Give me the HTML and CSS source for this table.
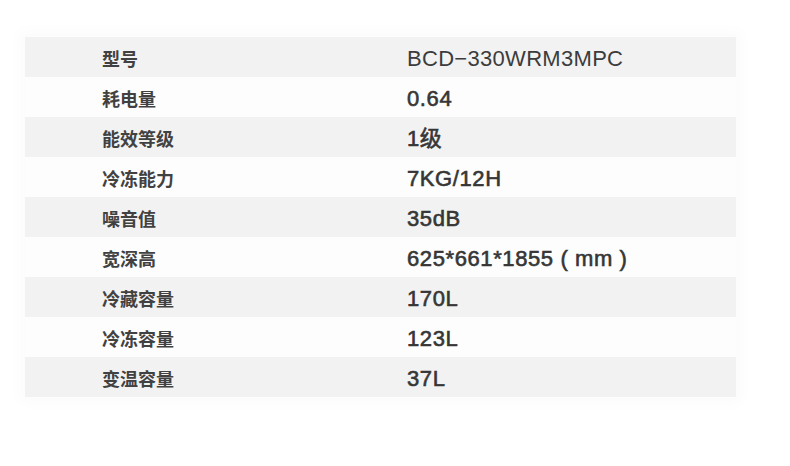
FILE: index.html
```html
<!DOCTYPE html>
<html lang="zh-CN">
<head>
<meta charset="utf-8">
<link rel="stylesheet" href="styles.css">
</head>
<body>
<div class="page">
  <div class="spec">
    <div class="row alt"><div class="label">型号</div><div class="value thin">BCD−330WRM3MPC</div></div>
    <div class="row"><div class="label">耗电量</div><div class="value">0.64</div></div>
    <div class="row alt"><div class="label">能效等级</div><div class="value">1级</div></div>
    <div class="row"><div class="label">冷冻能力</div><div class="value">7KG/12H</div></div>
    <div class="row alt"><div class="label">噪音值</div><div class="value">35dB</div></div>
    <div class="row"><div class="label">宽深高</div><div class="value">625*661*1855 ( mm )</div></div>
    <div class="row alt"><div class="label">冷藏容量</div><div class="value">170L</div></div>
    <div class="row"><div class="label">冷冻容量</div><div class="value">123L</div></div>
    <div class="row alt"><div class="label">变温容量</div><div class="value">37L</div></div>
  </div>
</div>
</body>
</html>
```
FILE: styles.css
```css
html, body {
  margin: 0;
  padding: 0;
  background: #ffffff;
}
.page {
  width: 790px;
  height: 466px;
  padding: 37px 0 0 25px;
  box-sizing: border-box;
}
.spec {
  width: 711px;
  background: #fdfdfd;
  box-shadow: 0 0 14px 6px #fbfbfb;
}
.row {
  display: grid;
  grid-template-columns: 382px 1fr;
  align-items: center;
  height: 40px;
}
.row.alt {
  background: #f2f2f2;
}
.label {
  padding-left: 77px;
  font-family: "Noto Sans CJK SC", sans-serif;
  font-weight: 700;
  font-size: 18px;
  color: #414141;
  line-height: 40px;
}
.value {
  font-family: "Liberation Sans", "Noto Sans CJK SC", sans-serif;
  font-weight: 400;
  font-size: 22px;
  letter-spacing: 0.6px;
  color: #363636;
  -webkit-text-stroke: 0.6px #363636;
  line-height: 40px;
  padding-top: 2px;
}
.value.thin {
  letter-spacing: 0.3px;
  color: #3c3c3c;
  -webkit-text-stroke: 0;
}
```
